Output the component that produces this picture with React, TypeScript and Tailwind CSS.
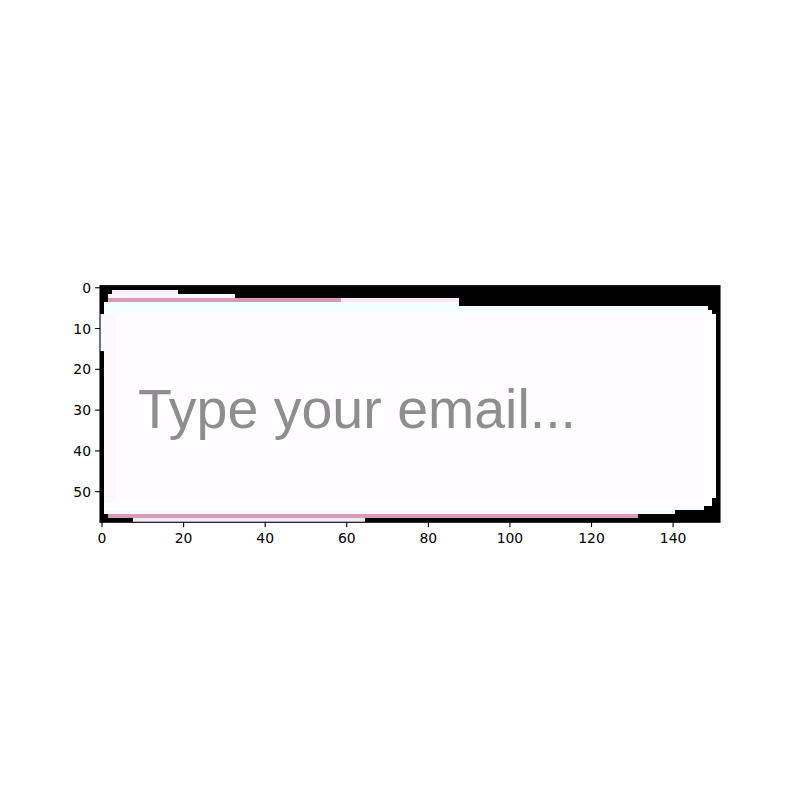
import React from "react";

// imshow-style plot: 152 x 58 image shown at 4.079 px per pixel
const X0 = 100;
const Y0 = 285.7;
const S = 620 / 152;

const X_TICKS = [0, 20, 40, 60, 80, 100, 120, 140];
const Y_TICKS = [0, 10, 20, 30, 40, 50];

type Block = { x: number; y: number; w: number; h: number; fill: string };

// image content, in image pixels
const BLOCKS: Block[] = [
  { x: 0, y: 0, w: 152, h: 58, fill: "#000000" },
  // top highlight rows
  { x: 3, y: 1, w: 16, h: 1, fill: "#fdf0f8" },
  { x: 2, y: 2, w: 31, h: 1, fill: "#fff6fb" },
  { x: 2, y: 3, w: 57, h: 1, fill: "#d59bba" },
  { x: 59, y: 3, w: 29, h: 1, fill: "#fbe7f3" },
  // body of the field
  { x: 1, y: 4, w: 87, h: 2, fill: "#f4ffff" },
  { x: 88, y: 5, w: 61, h: 2, fill: "#f4ffff" },
  { x: 1, y: 6, w: 149, h: 1, fill: "#f9ffff" },
  { x: 1, y: 7, w: 150, h: 45, fill: "#fffdff" },
  { x: 1, y: 52, w: 149, h: 2, fill: "#fffdff" },
  { x: 1, y: 54, w: 140, h: 1, fill: "#f7ffff" },
  { x: 141, y: 54, w: 7, h: 1, fill: "#f7ffff" },
  { x: 1, y: 55, w: 140, h: 1, fill: "#fef7fc" },
  { x: 1, y: 7, w: 3, h: 46, fill: "#fef8fd" },
  { x: 0, y: 7, w: 1, h: 9, fill: "#f6ffff" },
  // bottom line
  { x: 2, y: 56, w: 130, h: 1, fill: "#d59bba" },
  { x: 8, y: 57, w: 57, h: 1, fill: "#fbe5f3" },
];

export default function App() {
  return (
    <div className="w-[800px] h-[800px] bg-white">
      <svg width="800" height="800" viewBox="0 0 800 800" className="block">
        <g transform={`translate(${X0} ${Y0}) scale(${S})`} shapeRendering="crispEdges">
          {BLOCKS.map((b, i) => (
            <rect key={i} x={b.x} y={b.y} width={b.w} height={b.h} fill={b.fill} />
          ))}
        </g>

        <text
          x="138"
          y="428"
          fill="#8e8e8e"
          fontSize="55.5"
          fontFamily="'Liberation Sans', Arial, sans-serif"
        >
          Type your email...
        </text>

        {/* spines */}
        <rect x={X0} y={Y0} width={620} height={58 * S} fill="none" stroke="#000" strokeWidth="1.1" />

        {X_TICKS.map(t => {
          const x = X0 + (t + 0.5) * S;
          return (
            <g key={t}>
              <line x1={x} x2={x} y1={Y0 + 58 * S} y2={Y0 + 58 * S + 4.9} stroke="#000" strokeWidth="1.1" />
              <text
                x={x}
                y={543}
                textAnchor="middle"
                fontSize="13.9"
                fontFamily="'DejaVu Sans', sans-serif"
                fill="#000"
              >
                {t}
              </text>
            </g>
          );
        })}

        {Y_TICKS.map(t => {
          const y = Y0 + (t + 0.5) * S;
          return (
            <g key={t}>
              <line x1={X0 - 4.9} x2={X0} y1={y} y2={y} stroke="#000" strokeWidth="1.1" />
              <text
                x={91}
                y={y + 5}
                textAnchor="end"
                fontSize="13.9"
                fontFamily="'DejaVu Sans', sans-serif"
                fill="#000"
              >
                {t}
              </text>
            </g>
          );
        })}
      </svg>
    </div>
  );
}
